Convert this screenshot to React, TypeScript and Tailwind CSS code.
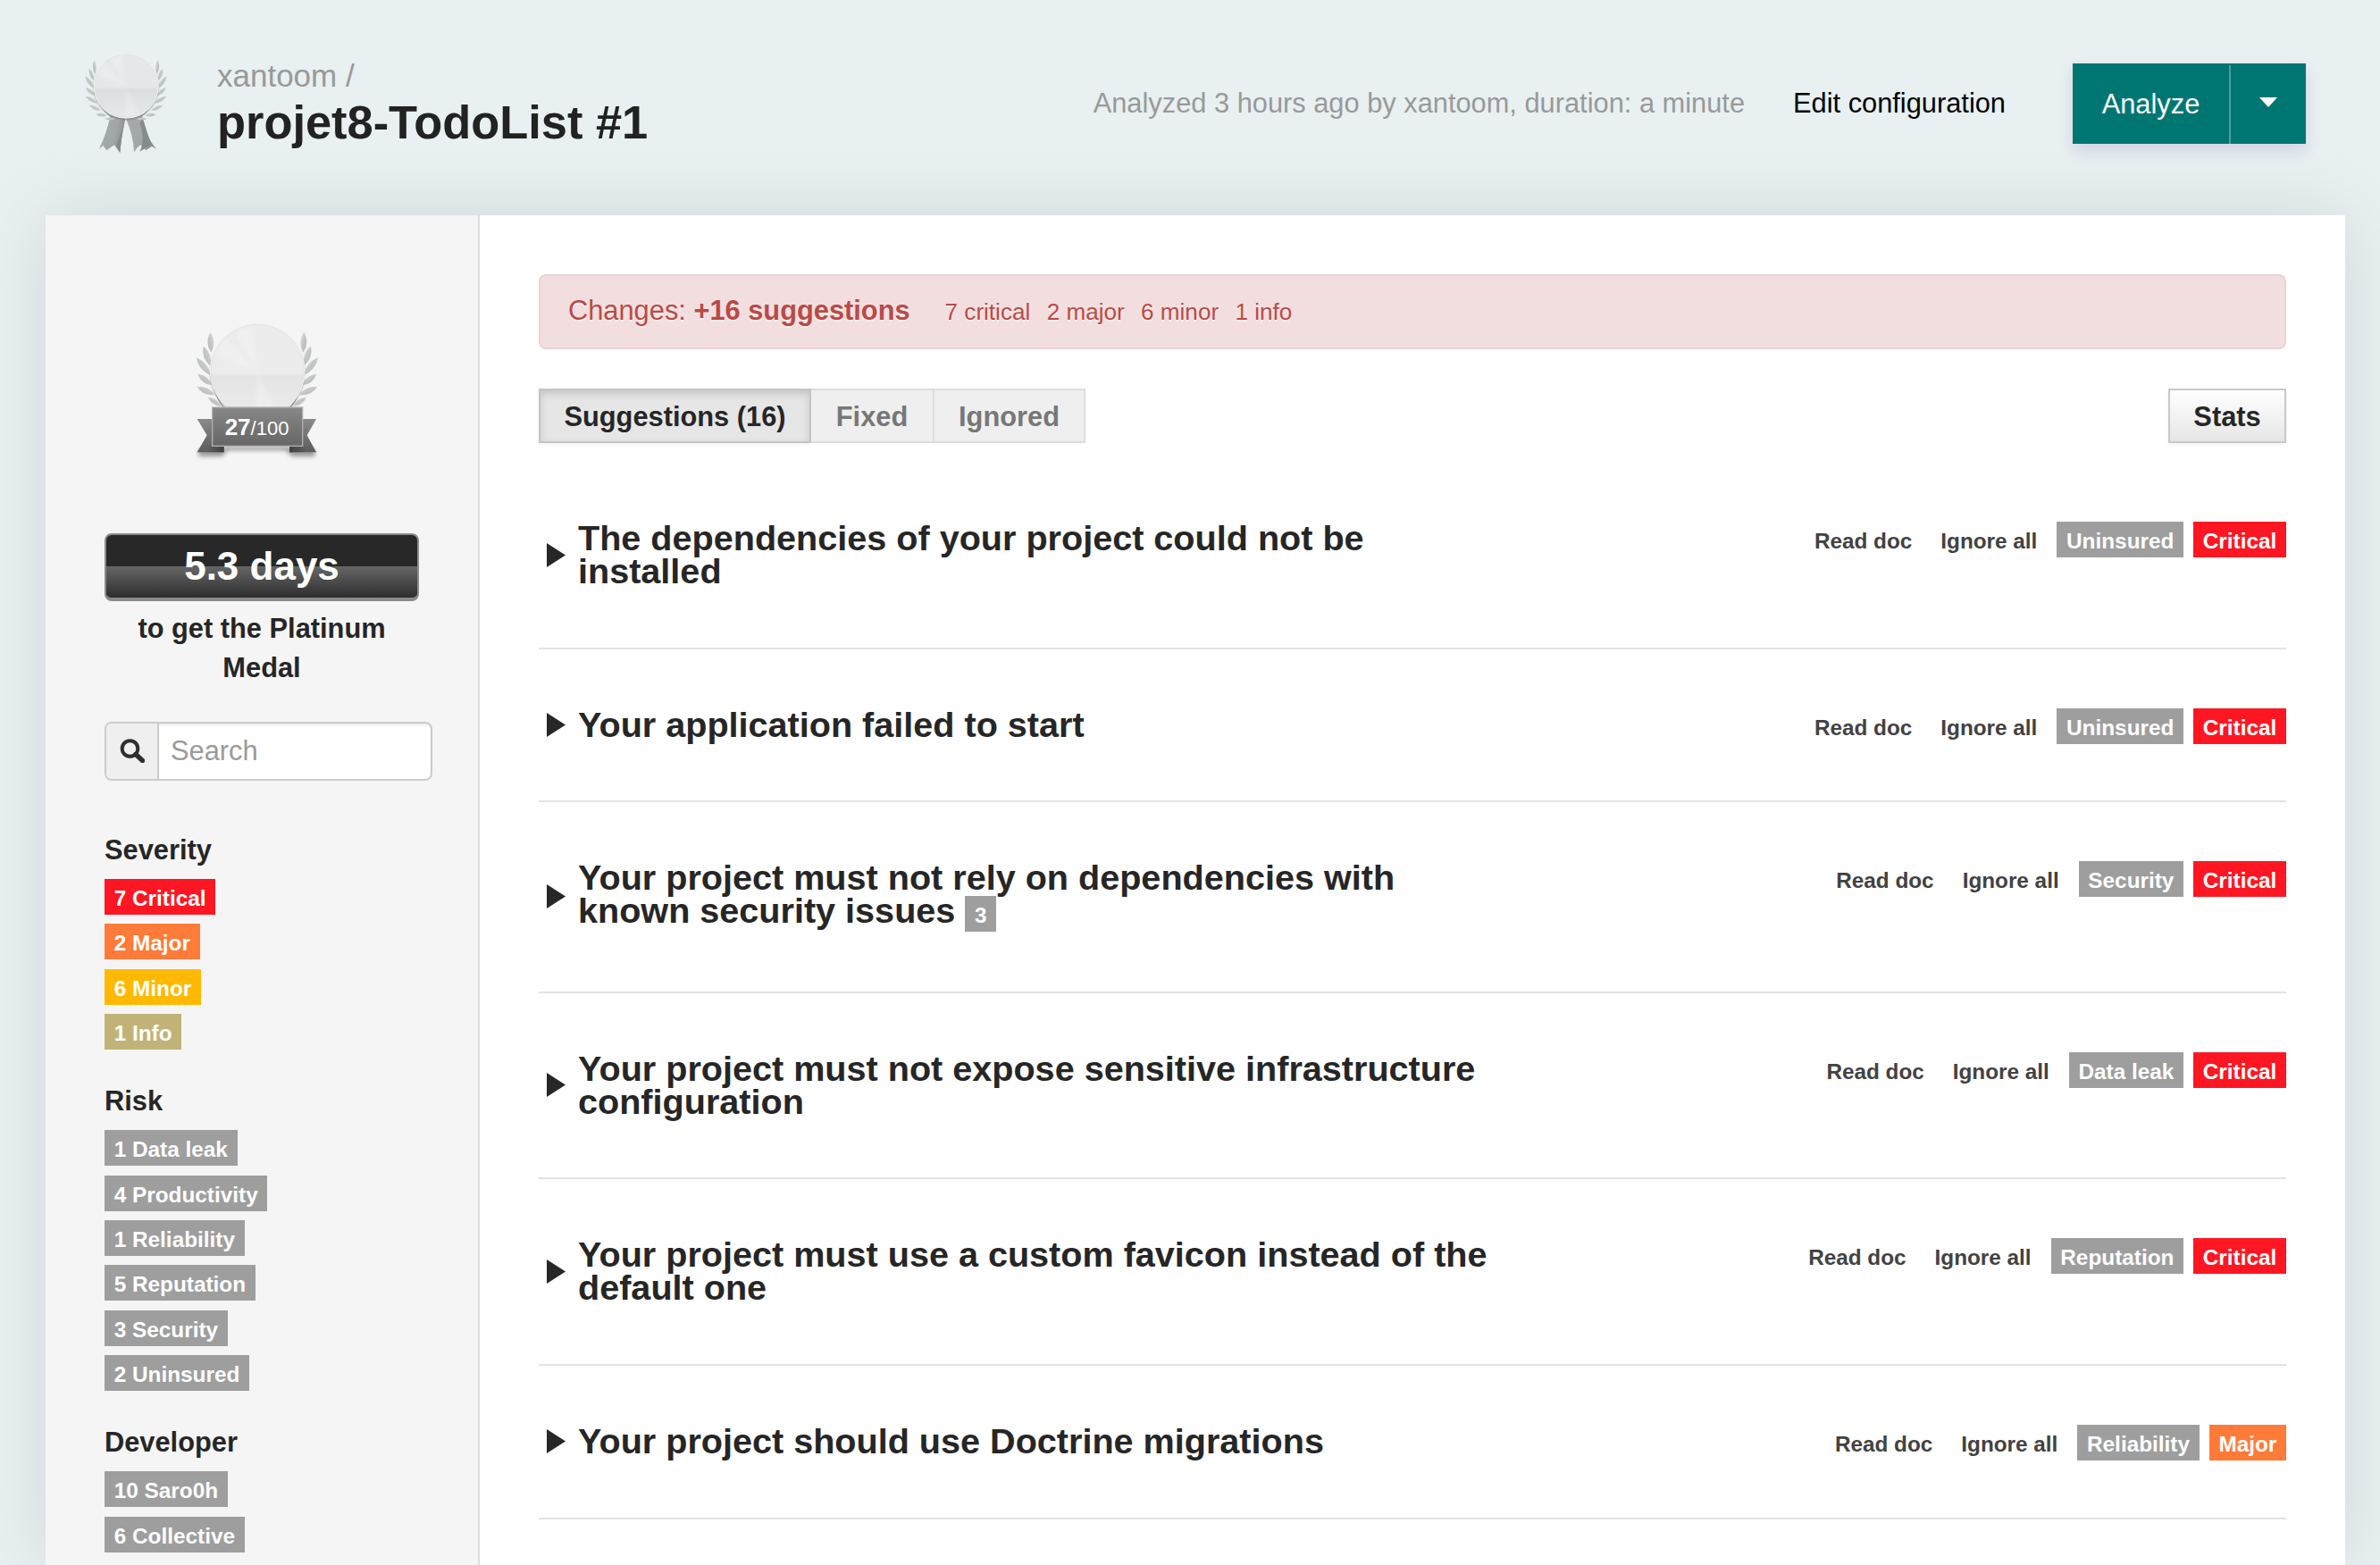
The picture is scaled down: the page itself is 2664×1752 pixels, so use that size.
import React from "react";

const tones = {
  critical: "bg-[#fe1722]",
  major: "bg-[#ff7b39]",
  minor: "bg-[#ffb900]",
  info: "bg-[#c1b277]",
  gray: "bg-[#9e9e9e]",
};
type Tone = keyof typeof tones;

function Label({ tone = "gray", children }: { tone?: Tone; children: React.ReactNode }) {
  return (
    <span
      className={`inline-block h-10 whitespace-nowrap px-[10.7px] pt-[3px] text-[24.35px] leading-[37px] font-bold text-white ${tones[tone]}`}
    >
      {children}
    </span>
  );
}

type LeafBox = [number, number, number, number, number];

/** Laurel leaf from tip (x1, y1) to stem (x2, y2), `w` controls its breadth. */
function leafPath([x1, y1, x2, y2, w]: LeafBox) {
  const dx = x2 - x1;
  const dy = y2 - y1;
  const len = Math.hypot(dx, dy);
  const nx = (-dy / len) * w;
  const ny = (dx / len) * w;
  const mx = x1 + dx * 0.5;
  const my = y1 + dy * 0.5;
  return `M${x1} ${y1}Q${mx + nx} ${my + ny} ${x2} ${y2}Q${mx - nx} ${my - ny} ${x1} ${y1}Z`;
}

function Disc({ id, cx, cy, r, light, dark }: { id: string; cx: number; cy: number; r: number; light: string; dark: string }) {
  const wedge = (a: number, b: number) => {
    const p = (t: number) => `${cx + r * 0.94 * Math.cos((t * Math.PI) / 180)} ${cy + r * 0.94 * Math.sin((t * Math.PI) / 180)}`;
    return `M${cx} ${cy}L${p(a)}A${r * 0.94} ${r * 0.94} 0 0 1 ${p(b)}Z`;
  };
  return (
    <g>
      <defs>
        <linearGradient id={`${id}-disc`} x1="0" y1="0" x2="0" y2="1">
          <stop offset="0" stopColor={light} />
          <stop offset="0.52" stopColor={light} />
          <stop offset="0.56" stopColor={dark} />
          <stop offset="1" stopColor={light} />
        </linearGradient>
        <filter id={`${id}-soft`} x="-20%" y="-20%" width="140%" height="140%">
          <feGaussianBlur stdDeviation="6" />
        </filter>
        <filter id={`${id}-edge`} x="-20%" y="-20%" width="140%" height="140%">
          <feGaussianBlur stdDeviation="2.5" />
        </filter>
      </defs>
      <circle cx={cx} cy={cy + 5} r={r - 2} fill="#5d6162" opacity="0.7" filter={`url(#${id}-edge)`} />
      <circle cx={cx} cy={cy} r={r} fill="#f1f2f2" />
      <circle cx={cx} cy={cy} r={r - 4} fill={`url(#${id}-disc)`} stroke="#dcdede" strokeWidth="2" />
      <g fill="#ffffff" opacity="0.22" filter={`url(#${id}-soft)`}>
        <path d={wedge(65, 92)} />
        <path d={wedge(200, 225)} />
        <path d={wedge(240, 262)} />
      </g>
    </g>
  );
}

function Laurel({ leaves, mirror, stem, id }: { leaves: LeafBox[]; mirror: number; stem: string; id: string }) {
  const side = (
    <g>
      <path d={stem} fill="none" stroke="#9b9d9e" strokeWidth="4" />
      {leaves.map((l, i) => (
        <path key={i} d={leafPath(l)} fill={`url(#${id}-leaf)`} />
      ))}
    </g>
  );
  return (
    <g>
      <defs>
        <linearGradient id={`${id}-leaf`} x1="0" y1="1" x2="1" y2="0">
          <stop offset="0" stopColor="#b0b2b3" />
          <stop offset="0.5" stopColor="#c4c6c6" />
          <stop offset="1" stopColor="#dbdddd" />
        </linearGradient>
      </defs>
      {side}
      <g transform={`translate(${mirror} 0) scale(-1 1)`}>{side}</g>
    </g>
  );
}

const smallLeaves: LeafBox[] = [
  [76, 66, 79, 114, 12],
  [59, 95, 77, 138, 12],
  [46, 121, 78, 164, 13],
  [48, 159, 82, 188, 12],
  [47, 188, 88, 212, 12],
  [59, 218, 98, 236, 11],
  [83, 249, 120, 252, 12],
  [112, 264, 148, 264, 8],
];

const largeLeaves: LeafBox[] = [
  [91, 65, 94, 134, 21],
  [68, 112, 92, 180, 21],
  [44, 151, 92, 210, 21],
  [49, 206, 98, 244, 20],
  [47, 250, 106, 276, 20],
  [83, 284, 128, 314, 16],
];

function SmallMedal() {
  return (
    <svg viewBox="0 0 360 420" className="h-[140px] w-[120px] shrink-0">
      <defs>
        <linearGradient id="tail" x1="0" y1="0" x2="1" y2="0.3">
          <stop offset="0" stopColor="#a7abab" />
          <stop offset="0.7" stopColor="#a2a6a6" />
          <stop offset="1" stopColor="#8c9090" />
        </linearGradient>
      </defs>
      <path d="M132 250L182 262Q172 300 167 340L163 378L144 352L118 370L106 354L92 367Q116 320 132 250Z" fill="url(#tail)" />
      <path d="M182 262L236 250L254 310Q264 345 285 365L270 356L250 370L232 352L222 360L210 376Q208 320 182 262Z" fill="url(#tail)" />
      <path d="M238 262L254 310Q264 345 285 365L266 352L228 374Q250 340 230 280Z" fill="#868a8b" />
      <path d="M177 285Q168 320 163 378L150 358Q162 320 177 285Z" fill="#868a8b" />
      <Laurel id="sm" leaves={smallLeaves} mirror={366} stem="M76 160Q88 225 140 262" />
      <Disc id="sm" cx={183.5} cy={153} r={110} light="#e4e8e9" dark="#dadee0" />
    </svg>
  );
}

function ScoreMedal() {
  return (
    <div className="relative h-[175px] w-[165px]">
      <svg viewBox="0 0 495 525" className="h-full w-full">
        <defs>
          <linearGradient id="band" x1="0" y1="0" x2="0" y2="1">
            <stop offset="0" stopColor="#888888" />
            <stop offset="1" stopColor="#666666" />
          </linearGradient>
          <linearGradient id="band-end" x1="0" y1="0" x2="0" y2="1">
            <stop offset="0" stopColor="#8a8a8a" />
            <stop offset="1" stopColor="#5c5c5c" />
          </linearGradient>
          <linearGradient id="fold" x1="0" y1="0" x2="1" y2="0">
            <stop offset="0" stopColor="#3c3c3c" stopOpacity="0" />
            <stop offset="1" stopColor="#3c3c3c" stopOpacity="0.9" />
          </linearGradient>
          <filter id="blur" x="-20%" y="-50%" width="140%" height="200%">
            <feGaussianBlur stdDeviation="8" />
          </filter>
        </defs>
        <Laurel id="lg" leaves={largeLeaves} mirror={497} stem="M90 200Q98 270 140 325" />
        <Disc id="lg" cx={249.5} cy={196} r={160} light="#ececec" dark="#e4e4e4" />
        <path d="M52 460H138V450H360V460H442V482H365L345 462H150L130 482H52Z" fill="#000000" opacity="0.4" filter="url(#blur)" />
        <path d="M47 357H137V469H47L80 412Z" fill="url(#band-end)" />
        <path d="M447 357H357V469H447L416 412Z" fill="url(#band-end)" />
        <rect x="80" y="449" width="57" height="20" fill="url(#fold)" />
        <rect x="357" y="449" width="57" height="20" fill="url(#fold)" transform="translate(771 0) scale(-1 1)" />
        <rect x="98" y="318" width="303" height="130" fill="url(#band)" stroke="#b0b0b0" strokeWidth="4" />
      </svg>
      <div className="absolute inset-x-0 top-[109px] text-center text-[22px] leading-[39px] text-white">
        <b className="text-[26px]">27</b>/100
      </div>
    </div>
  );
}

function Facet({ title, items, className = "" }: { title: string; items: [string, Tone][]; className?: string }) {
  return (
    <section className={className}>
      <h3 className="mb-3 text-[30.8px] leading-10 font-bold">{title}</h3>
      <ul className="flex flex-col items-start gap-[10.4px]">
        {items.map(([text, tone]) => (
          <li key={text} className="flex">
            <Label tone={tone}>{text}</Label>
          </li>
        ))}
      </ul>
    </section>
  );
}

type Issue = {
  title: string;
  count?: number;
  risk: string;
  severity: string;
  tone: Tone;
  height: string;
  arrow: string;
};

const issues: Issue[] = [
  { title: "The dependencies of your project could not be installed", risk: "Uninsured", severity: "Critical", tone: "critical", height: "h-[208px] pt-[65px]", arrow: "mt-[24px]" },
  { title: "Your application failed to start", risk: "Uninsured", severity: "Critical", tone: "critical", height: "h-[171px] pt-[66px]", arrow: "mt-[5px]" },
  { title: "Your project must not rely on dependencies with known security issues", count: 3, risk: "Security", severity: "Critical", tone: "critical", height: "h-[214px] pt-[66px]", arrow: "mt-[26px]" },
  { title: "Your project must not expose sensitive infrastructure configuration", risk: "Data leak", severity: "Critical", tone: "critical", height: "h-[208px] pt-[66px]", arrow: "mt-[23px]" },
  { title: "Your project must use a custom favicon instead of the default one", risk: "Reputation", severity: "Critical", tone: "critical", height: "h-[209px] pt-[66px]", arrow: "mt-[24px]" },
  { title: "Your project should use Doctrine migrations", risk: "Reliability", severity: "Major", tone: "major", height: "h-[172px] pt-[66px]", arrow: "mt-[5px]" },
];

function IssueRow({ issue }: { issue: Issue }) {
  return (
    <li className={`flex items-start border-b-2 border-[#e3e3e3] ${issue.height}`}>
      <svg viewBox="0 0 21 27" className={`ml-[9px] h-[27px] w-[21px] shrink-0 ${issue.arrow}`}>
        <path d="M0 0L21 13.5L0 27Z" fill="#272727" />
      </svg>
      <h2 className="ml-[14px] w-[1033px] text-[39.6px] leading-[37.4px] font-bold">
        {issue.title}
        {issue.count && (
          <>
            {" "}
            <Label>{issue.count}</Label>
          </>
        )}
      </h2>
      <div className="ml-auto flex text-[24.3px] font-bold text-[#424242]">
        <a className="mr-[32px] pt-[3px] leading-[37px]">Read doc</a>
        <a className="mr-[22px] pt-[3px] leading-[37px]">Ignore all</a>
        <div className="flex gap-[11px]">
          <Label>{issue.risk}</Label>
          <Label tone={issue.tone}>{issue.severity}</Label>
        </div>
      </div>
    </li>
  );
}

export default function App() {
  return (
    <div className="flex h-[1752px] w-[2664px] flex-col overflow-hidden bg-[#e8f0f1] font-['Liberation_Sans',Arial,sans-serif] text-[30.8px] text-[#262626]">
      <header className="relative z-10 flex h-[241px] shrink-0 items-start pr-[83px] pl-20">
        <div className="pt-[45px]">
          <SmallMedal />
        </div>
        <div className="ml-[43px] pt-[63px]">
          <div className="text-[35px] leading-[44px] text-[#999999]">xantoom /</div>
          <h1 className="mt-[2px] text-[52.4px] leading-[56px] font-bold text-[#222222]">projet8-TodoList #1</h1>
        </div>
        <div className="ml-auto flex items-start">
          <span className="mt-[99px] leading-[34px] text-[#999999]">Analyzed 3 hours ago by xantoom, duration: a minute</span>
          <a className="mt-[99px] ml-[54px] leading-[34px] text-black">Edit configuration</a>
          <div className="mt-[71px] ml-[75px] flex h-[90px] bg-[#007673] text-white shadow-[0_8px_16px_rgba(60,30,130,0.13)]">
            <button className="w-[175px] pt-px text-center leading-[34px]">Analyze</button>
            <button className="mt-[2px] flex w-[86px] items-start justify-center border-l-2 border-[#4d9f9d]">
              <svg viewBox="0 0 20 11" className="mt-[36px] h-[11px] w-[20px]">
                <path d="M0 0H20L10 11Z" fill="#ffffff" />
              </svg>
            </button>
          </div>
        </div>
      </header>

      <div className="mr-[39px] ml-[51px] flex grow bg-white shadow-[0_0_80px_rgba(0,0,50,0.1)]">
        <aside className="w-[486px] shrink-0 border-r-2 border-[#dedede] bg-[#f5f5f5] pl-[66px]">
          <div className="mt-[109px] ml-[88px]">
            <ScoreMedal />
          </div>
          <div className="mt-[72px] flex h-[76px] w-[352px] items-center justify-center rounded-lg border-2 border-b-4 border-[#8a8a8a] bg-[linear-gradient(to_bottom,#282828_0%,#282828_50%,#666666_50%,#2e2e2e_100%)] text-[44px] leading-none font-bold text-white">
            5.3 days
          </div>
          <p className="mt-[9px] w-[352px] text-center leading-[44px] font-bold">to get the Platinum Medal</p>
          <div className="mt-[38px] flex h-[66px] w-[367px] overflow-hidden rounded-lg border-2 border-[#cccccc] bg-white">
            <span className="flex w-[59px] border-r-2 border-[#cccccc] bg-[#efefef]">
              <svg viewBox="0 0 28 27" className="mt-[17px] ml-[15px] h-[27px] w-[28px]" fill="none" stroke="#2f2f2f">
                <circle cx="11.5" cy="11" r="8.8" strokeWidth="4" />
                <path d="M18 17.5L25.5 24.5" strokeWidth="5.5" strokeLinecap="round" />
              </svg>
            </span>
            <span className="grow pt-[13px] pl-[13px] leading-[36px] text-[#9a9a9a] shadow-[inset_0_2px_2px_rgba(0,0,0,0.075)]">Search</span>
          </div>
          <Facet
            className="mt-[58px]"
            title="Severity"
            items={[
              ["7 Critical", "critical"],
              ["2 Major", "major"],
              ["6 Minor", "minor"],
              ["1 Info", "info"],
            ]}
          />
          <Facet
            className="mt-[38px]"
            title="Risk"
            items={[
              ["1 Data leak", "gray"],
              ["4 Productivity", "gray"],
              ["1 Reliability", "gray"],
              ["5 Reputation", "gray"],
              ["3 Security", "gray"],
              ["2 Uninsured", "gray"],
            ]}
          />
          <Facet
            className="mt-[38px]"
            title="Developer"
            items={[
              ["10 Saro0h", "gray"],
              ["6 Collective", "gray"],
            ]}
          />
        </aside>

        <main className="grow pr-[66px] pl-[66px]">
          <div className="mt-[66px] flex h-[84px] items-baseline rounded-lg border-2 border-[#ead3d6] bg-[#f2dede] pt-[20px] pl-[31px] text-[#b94a48] [text-shadow:0_2px_0_rgba(255,255,255,0.5)]">
            <span className="leading-[38px]">
              Changes: <b>+16 suggestions</b>
            </span>
            <span className="ml-[39px] flex gap-[18.4px] text-[26.1px]">
              <span>7 critical</span>
              <span>2 major</span>
              <span>6 minor</span>
              <span>1 info</span>
            </span>
          </div>

          <div className="mt-[44px] flex h-[61px] justify-between leading-[34px] font-bold [text-shadow:0_2px_2px_rgba(255,255,255,0.75)]">
            <div className="flex">
              <button className="w-[305px] border-2 border-[#c4c4c4] bg-[#e6e6e6] pt-[2px] shadow-[inset_0_4px_8px_rgba(0,0,0,0.15),0_2px_4px_rgba(0,0,0,0.05)]">
                Suggestions (16)
              </button>
              <button className="w-[138px] border-2 border-l-0 border-[#dddddd] bg-[#efefef] pt-[2px] text-[#777777]">Fixed</button>
              <button className="w-[169px] border-2 border-l-0 border-[#dddddd] bg-[#efefef] pt-[2px] text-[#777777]">Ignored</button>
            </div>
            <button className="w-[132px] border-2 border-[#c8c8c8] bg-linear-to-b from-white to-[#e6e6e6] pt-[2px] shadow-[0_2px_4px_rgba(0,0,0,0.05)]">
              Stats
            </button>
          </div>

          <ul className="mt-[23px]">
            {issues.map((issue) => (
              <IssueRow key={issue.title} issue={issue} />
            ))}
          </ul>
        </main>
      </div>
    </div>
  );
}
